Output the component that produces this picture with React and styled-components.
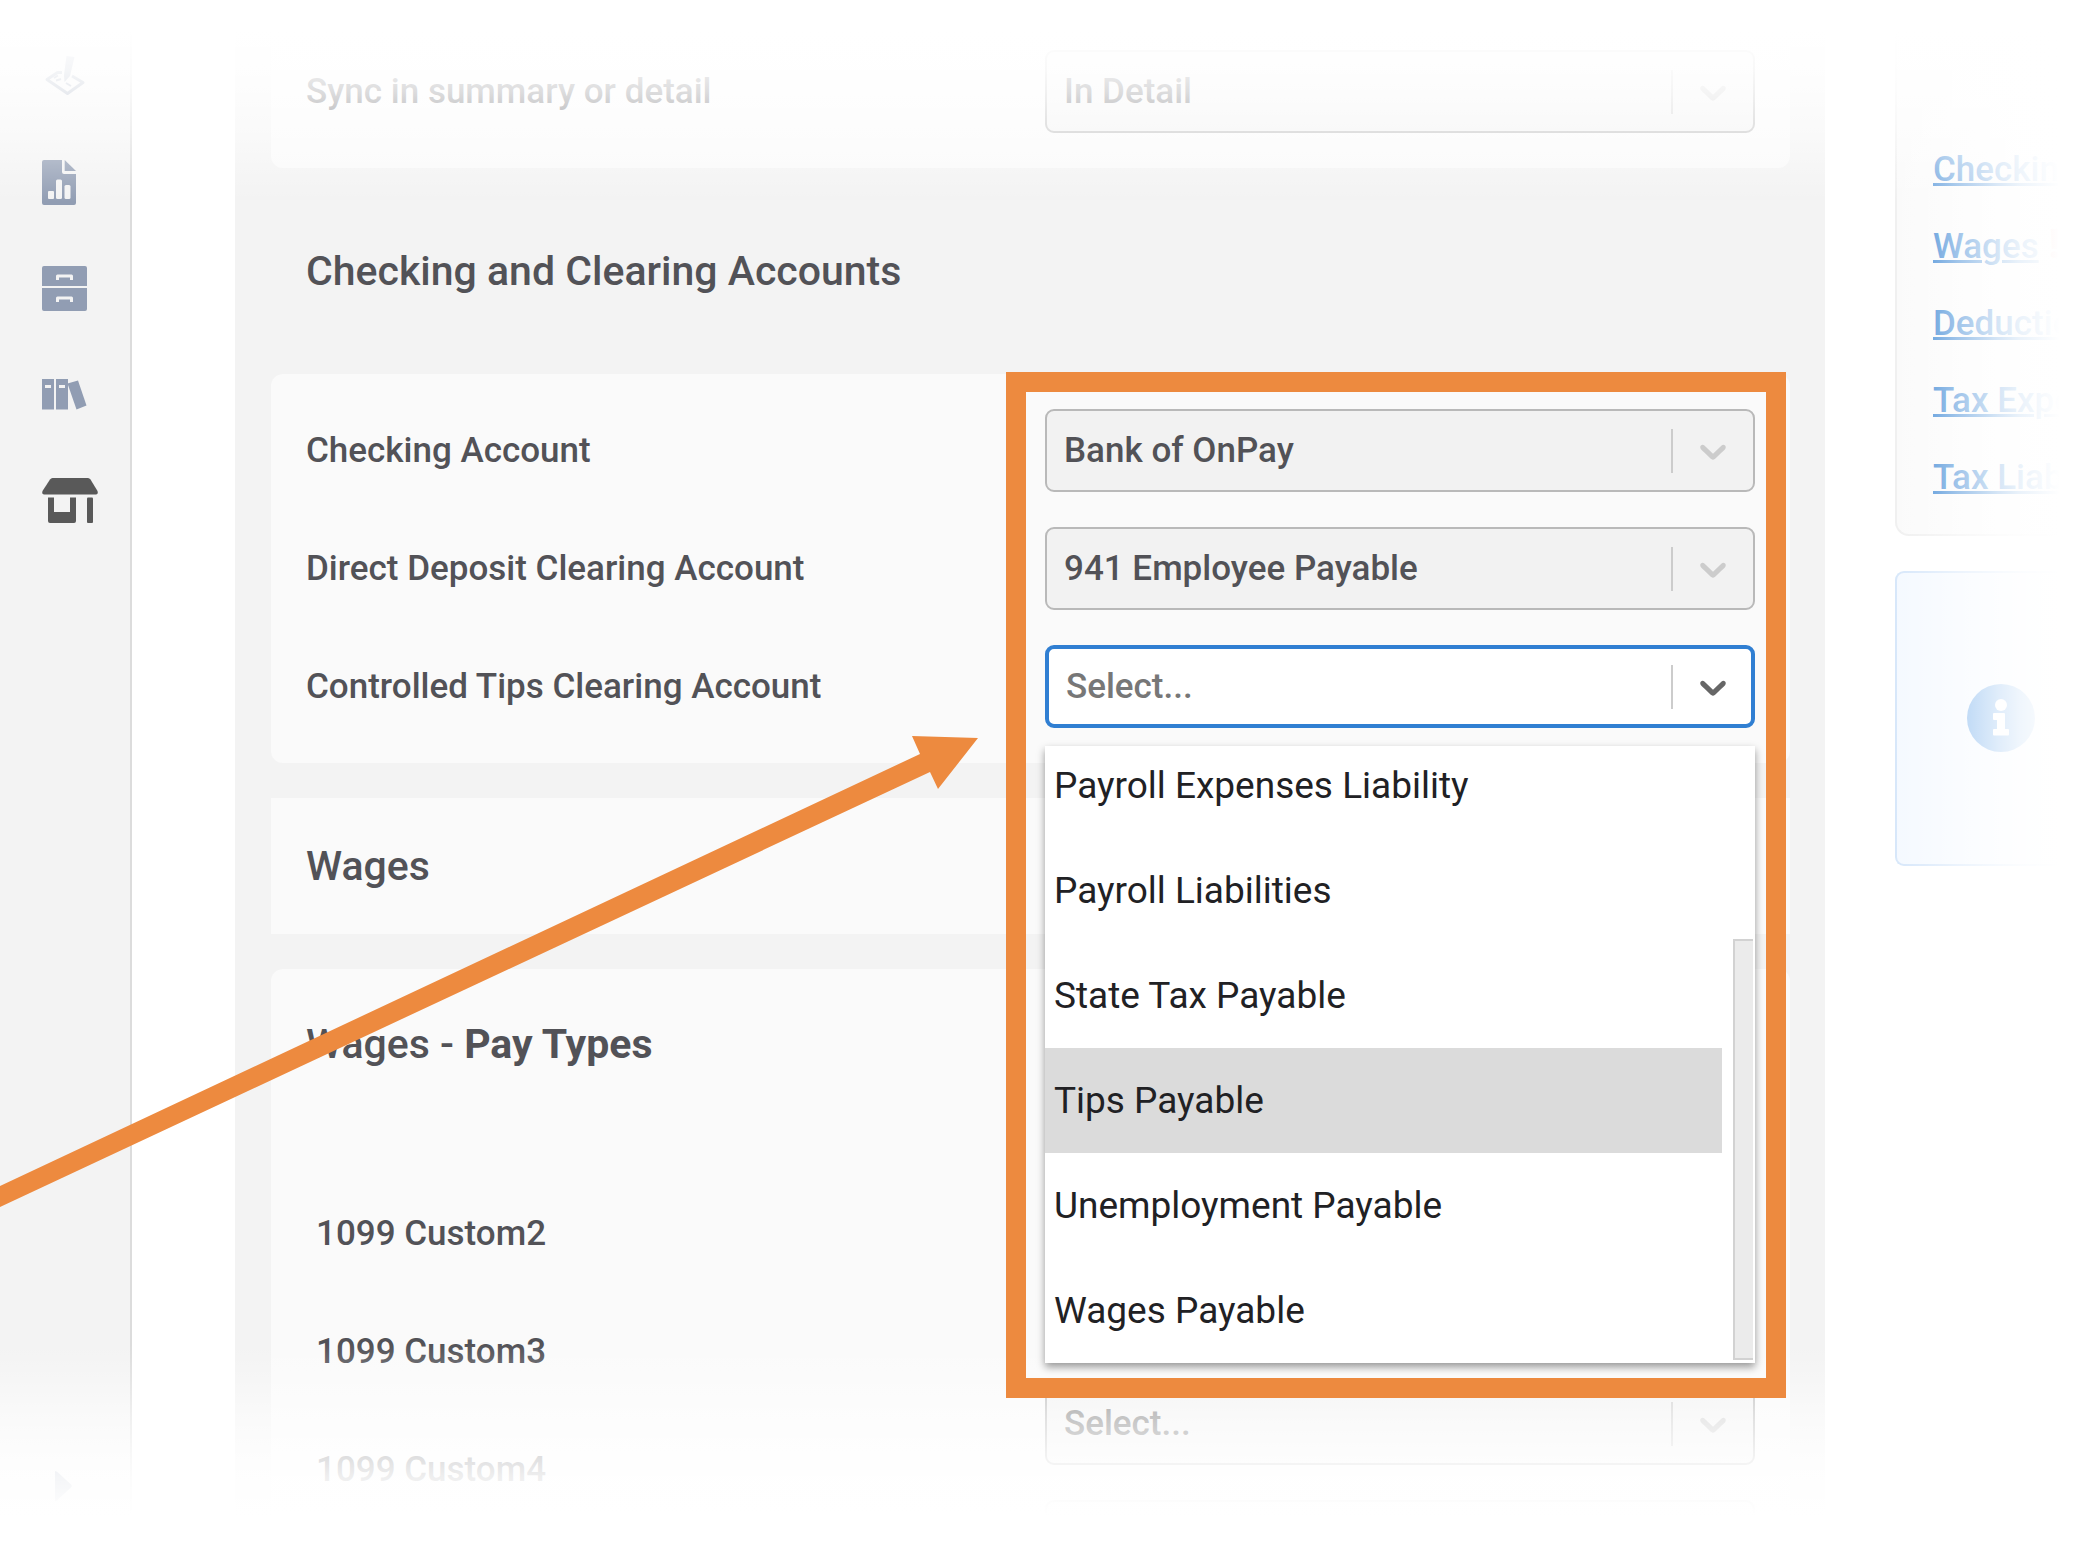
import React from "react";
import styled, { createGlobalStyle, css } from "styled-components";

const GlobalStyle = createGlobalStyle`
  * {
    box-sizing: border-box;
  }
  body {
    margin: 0;
    background-color: white;
    color: #525257;
    font-family: Roboto, "Liberation Sans", sans-serif;
    font-size: 35px;
    line-height: 46px;
  }
`;

const Page = styled.div`
  position: relative;
  display: flex;
  height: 100vh;
  overflow: hidden;
`;

const Sidebar = styled.nav`
  flex: none;
  display: flex;
  flex-direction: column;
  width: 132px;
  padding: 23px 0 30px;
  background-color: #f3f3f3;
  border-right: 2px solid #dcdcdc;
`;

const NavLink = styled.a`
  display: flex;
  align-items: center;
  height: 106px;
  padding-left: 42px;
  color: ${(props) => (props.$active ? "#595959" : "#919db3")};
`;

const ExpandButton = styled.button`
  display: flex;
  align-items: center;
  height: 60px;
  margin-top: auto;
  padding: 0 0 0 55px;
  border: none;
  background: none;
  color: #919db3;
`;

const Main = styled.main`
  flex: 1;
  min-width: 0;
  margin: 0 70px 0 103px;
  padding: 0 35px 0 36px;
  background-color: #f3f3f3;
`;

const Card = styled.section`
  display: grid;
  grid-template-columns: 51fr 49fr;
  row-gap: 35px;
  margin-bottom: 35px;
  padding: 35px;
  background-color: #fafafa;
  border-radius: 12px;
`;

const FirstCard = styled(Card)`
  margin-bottom: 0;
  padding-top: 50px;
`;

const TitleCard = styled.section`
  margin-bottom: 35px;
  padding: 45px 35px;
  background-color: #fafafa;
`;

const PayTypesCard = styled.section`
  padding: 52px 35px;
  background-color: #fafafa;
  border-radius: 12px;
`;

const Title = styled.h2`
  margin: 0;
  font-size: 41px;
  line-height: 46px;
  font-weight: 500;
`;

const SectionTitle = styled(Title)`
  padding: 80px 35px;
`;

const PayTypes = styled.div`
  display: grid;
  grid-template-columns: 51fr 49fr;
  padding-top: 125px;
`;

const Column = styled.div`
  display: flex;
  flex-direction: column;
  gap: 35px;
`;

const LabelColumn = styled(Column)`
  padding-left: 10px;
`;

const SelectColumn = styled(Column)`
  padding-top: 72px;
`;

const Label = styled.label`
  display: flex;
  align-items: center;
  height: 83px;
  font-weight: 500;
`;

const Field = styled.div`
  position: relative;
  height: 83px;
`;

const Select = styled.select`
  appearance: none;
  width: 100%;
  height: 100%;
  padding: 0 100px 0 17px;
  border: 2px solid #b9b9b9;
  border-radius: 9px;
  background-color: #f2f2f2;
  color: ${(props) => (props.$empty ? "#777777" : "#525257")};
  font-family: inherit;
  font-size: 35px;
  font-weight: 500;
  opacity: 1;

  ${(props) =>
    props.$open &&
    css`
      border: 4px solid #307fd2;
      background-color: white;
      outline: none;
    `}
`;

const Indicator = styled.span`
  position: absolute;
  top: 20px;
  right: 20px;
  display: flex;
  align-items: center;
  height: 44px;
  padding-left: 18px;
  border-left: 2px solid #cccccc;
  color: ${(props) => (props.$open ? "#666666" : "#cccccc")};
  pointer-events: none;
`;

const Menu = styled.ul`
  position: absolute;
  z-index: 4;
  top: 101px;
  left: 0;
  right: 0;
  display: flex;
  flex-direction: column;
  justify-content: flex-end;
  height: 617px;
  margin: 0;
  padding: 0;
  overflow: hidden;
  list-style: none;
  background-color: white;
  color: #212124;
  font-size: 37px;
`;

const MenuShadow = styled.div`
  position: absolute;
  z-index: 4;
  top: 101px;
  left: 0;
  right: 0;
  height: 617px;
  box-shadow: 0 4px 8px rgba(0, 0, 0, 0.4);
`;

const MenuItem = styled.li`
  flex: none;
  margin-right: 33px;
  padding-left: 9px;
  line-height: 105px;
  background-color: ${(props) => (props.$active ? "#dbdbdb" : "white")};
`;

const Thumb = styled.span`
  position: absolute;
  right: 2px;
  bottom: 3px;
  width: 20px;
  height: 421px;
  border: 2px solid #d2d2d2;
  border-right: none;
  background-color: #ebebeb;
`;

const Highlight = styled.div`
  position: absolute;
  z-index: 5;
  top: -273px;
  left: -39px;
  right: -31px;
  height: 1026px;
  border: 20px solid #ed8a3f;
  pointer-events: none;
`;

const Arrow = styled.svg`
  position: absolute;
  z-index: 5;
  top: 0;
  left: 0;
  fill: #ed8a3f;
  pointer-events: none;
`;

const Aside = styled.aside`
  flex: none;
  width: 195px;
  overflow: hidden;
`;

const LinkCard = styled.div`
  display: flex;
  flex-direction: column;
  gap: 31px;
  margin-bottom: 35px;
  padding: 147px 0 33px 36px;
  border: 2px solid #efefef;
  border-width: 0 0 2px 2px;
  border-radius: 0 0 0 14px;
  background-color: #fafafa;
  white-space: nowrap;
`;

const AnchorRow = styled.div`
  font-weight: 500;
`;

const Anchor = styled.a`
  color: #2f7fd1;
  text-decoration-thickness: 3px;
`;

const Alert = styled.span`
  margin-left: 10px;
  color: #e5484d;
  font-size: 41px;
  line-height: 40px;
  font-weight: 900;
`;

const InfoCard = styled.div`
  display: flex;
  padding: 111px 0 112px 70px;
  border: 2px solid #d5e6fa;
  border-right: none;
  border-radius: 9px 0 0 9px;
  background-color: #f4f9ff;
`;

// opacity steps shared by the three edge fades
const fade = `
  white 30px,
  rgba(255, 255, 255, 0.9) 70px,
  rgba(255, 255, 255, 0.8) 92px,
  rgba(255, 255, 255, 0.55) 132px,
  rgba(255, 255, 255, 0.27) 165px,
  rgba(255, 255, 255, 0) 202px
`;

const Fade = styled.div`
  position: absolute;
  z-index: 3;
  top: ${(props) => (props.$side === "bottom" ? "auto" : 0)};
  bottom: ${(props) => (props.$side === "top" ? "auto" : 0)};
  left: ${(props) => (props.$side === "right" ? "auto" : 0)};
  right: 0;
  width: ${(props) => (props.$side === "right" ? "202px" : "auto")};
  height: ${(props) => (props.$side === "right" ? "auto" : "202px")};
  background: linear-gradient(
    ${(props) =>
      ({ top: "to bottom", bottom: "to top", right: "to left" })[props.$side]},
    ${fade}
  );
  pointer-events: none;
`;

const TimesheetIcon = () => (
  <svg width="45" height="42" viewBox="-3 0 45 42" fill="none">
    <path
      d="M17 17.500h-4.500L2 24.500 22.500 38.500 38 27.500 27 21"
      stroke="currentColor"
      strokeWidth="3"
      strokeLinejoin="round"
    />
    <path
      d="M9 23l4-2.500M11 25.500l5-1.500M21 28l5 3"
      stroke="currentColor"
      strokeWidth="2"
    />
    <path d="M21.500 1l8 1-4.500 19-5.500 6-0.500-7z" fill="currentColor" />
  </svg>
);

const ReportIcon = () => (
  <svg width="34" height="45" viewBox="0 0 34 45" fill="currentColor">
    <path d="M2 0H20V12Q20 14 22 14H34V43Q34 45 32 45H2Q0 45 0 43V2Q0 0 2 0Z" />
    <path d="M22.700 0L34 11H22.700Z" />
    <g fill="#f3f3f3">
      <rect x="6" y="31" width="6" height="8" rx="1" />
      <rect x="14" y="19.500" width="6" height="19.500" rx="1.500" />
      <rect x="22.500" y="25" width="6" height="14" rx="1.500" />
    </g>
  </svg>
);

const CabinetIcon = () => (
  <svg width="45" height="45" viewBox="0 0 45 45">
    <path
      fill="currentColor"
      d="M2 0H43Q45 0 45 2V20H0V2Q0 0 2 0ZM0 22H45V43Q45 45 43 45H2Q0 45 0 43Z"
    />
    <path
      fill="none"
      stroke="#f3f3f3"
      strokeWidth="3"
      strokeLinejoin="round"
      d="M15.500 14V10H29.500V14M15.500 36V32H29.500V36"
    />
  </svg>
);

const BooksIcon = () => (
  <svg width="45" height="31" viewBox="0 0 45 31" fill="currentColor">
    <path d="M0 0H12V30.500H0ZM3 6V9H9V6ZM14 0H26V30.500H14ZM17 6V9H23V6Z" fillRule="evenodd" />
    <path d="M25.500 4.500L36 1.500 44.500 26.500 34.500 30.500Z" />
  </svg>
);

const StoreIcon = () => (
  <svg width="56" height="45" viewBox="0 0 56 45" fill="currentColor">
    <path d="M10.500 0H46Q47.500 0 48.500 1.500L55.500 13Q56.500 16.500 54 16.500H2Q-0.500 16.500 0.500 13L8 1.500Q9 0 10.500 0Z" />
    <path d="M6 19.500H12V34H28V19.500H34V43Q34 45 32 45H8Q6 45 6 43Z" />
    <rect x="45" y="19.500" width="6" height="25.500" rx="1" />
  </svg>
);

const InfoIcon = () => (
  <svg width="68" height="68" viewBox="0 0 68 68">
    <circle cx="34" cy="34" r="34" fill="#63a4e9" />
    <circle cx="34" cy="21" r="6" fill="white" />
    <path
      fill="white"
      d="M27 29H37Q38 29 38 30V45H41Q42 45 42 46V50.500Q42 51.500 41 51.500H27Q26 51.500 26 50.500V46Q26 45 27 45H30V36H27Q26 36 26 35V30Q26 29 27 29Z"
    />
  </svg>
);

const Chevron = () => (
  <svg width="44" height="44" viewBox="0 0 20 20" fill="currentColor">
    <path d="M4.516 7.548c0.436-0.446 1.043-0.481 1.576 0l3.908 3.747 3.908-3.747c0.533-0.481 1.141-0.446 1.574 0 0.436 0.445 0.408 1.197 0 1.615-0.406 0.418-4.695 4.502-4.695 4.502-0.217 0.223-0.502 0.335-0.787 0.335s-0.570-0.112-0.789-0.335c0 0-4.287-4.084-4.695-4.502s-0.436-1.170 0-1.615z" />
  </svg>
);

const navItems = [
  { name: "Timesheets", icon: <TimesheetIcon /> },
  { name: "Reports", icon: <ReportIcon /> },
  { name: "Documents", icon: <CabinetIcon /> },
  { name: "Library", icon: <BooksIcon /> },
  { name: "Company", icon: <StoreIcon />, active: true },
];

const accounts = [
  "Payroll Expenses Liability",
  "Payroll Liabilities",
  "State Tax Payable",
  "Tips Payable",
  "Unemployment Payable",
  "Wages Payable",
];

const payTypes = ["1099 Custom2", "1099 Custom3", "1099 Custom4"];

const sections = [
  { name: "Checking and Clearing Accounts" },
  { name: "Wages", alert: true },
  { name: "Deductions" },
  { name: "Tax Expenses" },
  { name: "Tax Liabilities" },
];

const SelectField = ({ id, value, open, children }) => (
  <Field>
    <Select id={id} disabled={!open} $open={open} $empty={value === "Select..."}>
      <option>{value}</option>
    </Select>
    <Indicator $open={open}>
      <Chevron />
    </Indicator>
    {children}
  </Field>
);

const App = () => {
  return (
    <>
      <GlobalStyle />
      <Page>
        <Sidebar>
          {navItems.map((item) => (
            <NavLink
              key={item.name}
              href="#"
              aria-label={item.name}
              $active={item.active}
            >
              {item.icon}
            </NavLink>
          ))}
          <ExpandButton aria-label="Expand menu">
            <svg width="17" height="30" viewBox="0 0 17 30" fill="currentColor">
              <path d="M0 0Q2 0 4 2.500L16 13.500Q17.500 15 16 16.500L4 27.500Q2 30 0 30Z" />
            </svg>
          </ExpandButton>
        </Sidebar>

        <Main>
          <FirstCard>
            <Label htmlFor="sync">Sync in summary or detail</Label>
            <SelectField id="sync" value="In Detail" />
          </FirstCard>

          <SectionTitle>Checking and Clearing Accounts</SectionTitle>
          <Card>
            <Label htmlFor="checking">Checking Account</Label>
            <SelectField id="checking" value="Bank of OnPay" />
            <Label htmlFor="deposit">Direct Deposit Clearing Account</Label>
            <SelectField id="deposit" value="941 Employee Payable" />
            <Label htmlFor="tips">Controlled Tips Clearing Account</Label>
            <SelectField id="tips" value="Select..." open>
              <MenuShadow />
              <Menu role="listbox">
                {accounts.map((account) => (
                  <MenuItem
                    key={account}
                    role="option"
                    aria-selected={account === "Tips Payable"}
                    $active={account === "Tips Payable"}
                  >
                    {account}
                  </MenuItem>
                ))}
                <Thumb />
              </Menu>
              <Highlight />
            </SelectField>
          </Card>

          <TitleCard>
            <Title>Wages</Title>
          </TitleCard>

          <PayTypesCard>
            <Title>
              Wages - <b>Pay Types</b>
            </Title>
            <PayTypes>
              <LabelColumn>
                {payTypes.map((type) => (
                  <Label key={type} htmlFor={type}>
                    {type}
                  </Label>
                ))}
              </LabelColumn>
              <SelectColumn>
                {payTypes.map((type) => (
                  <SelectField key={type} id={type} value="Select..." />
                ))}
              </SelectColumn>
            </PayTypes>
          </PayTypesCard>
        </Main>

        <Aside>
          <LinkCard>
            {sections.map((section) => (
              <AnchorRow key={section.name}>
                <Anchor href="#">{section.name}</Anchor>
                {section.alert && <Alert>!</Alert>}
              </AnchorRow>
            ))}
          </LinkCard>
          <InfoCard>
            <InfoIcon />
          </InfoCard>
        </Aside>

        <Fade $side="top" />
        <Fade $side="bottom" />
        <Fade $side="right" />
        <Arrow width="980" height="1210" viewBox="0 0 980 1210">
          <polygon points="0,1186 920,754 912,736 978,738 938,789 930,772 0,1207" />
        </Arrow>
      </Page>
    </>
  );
};

export default App;
